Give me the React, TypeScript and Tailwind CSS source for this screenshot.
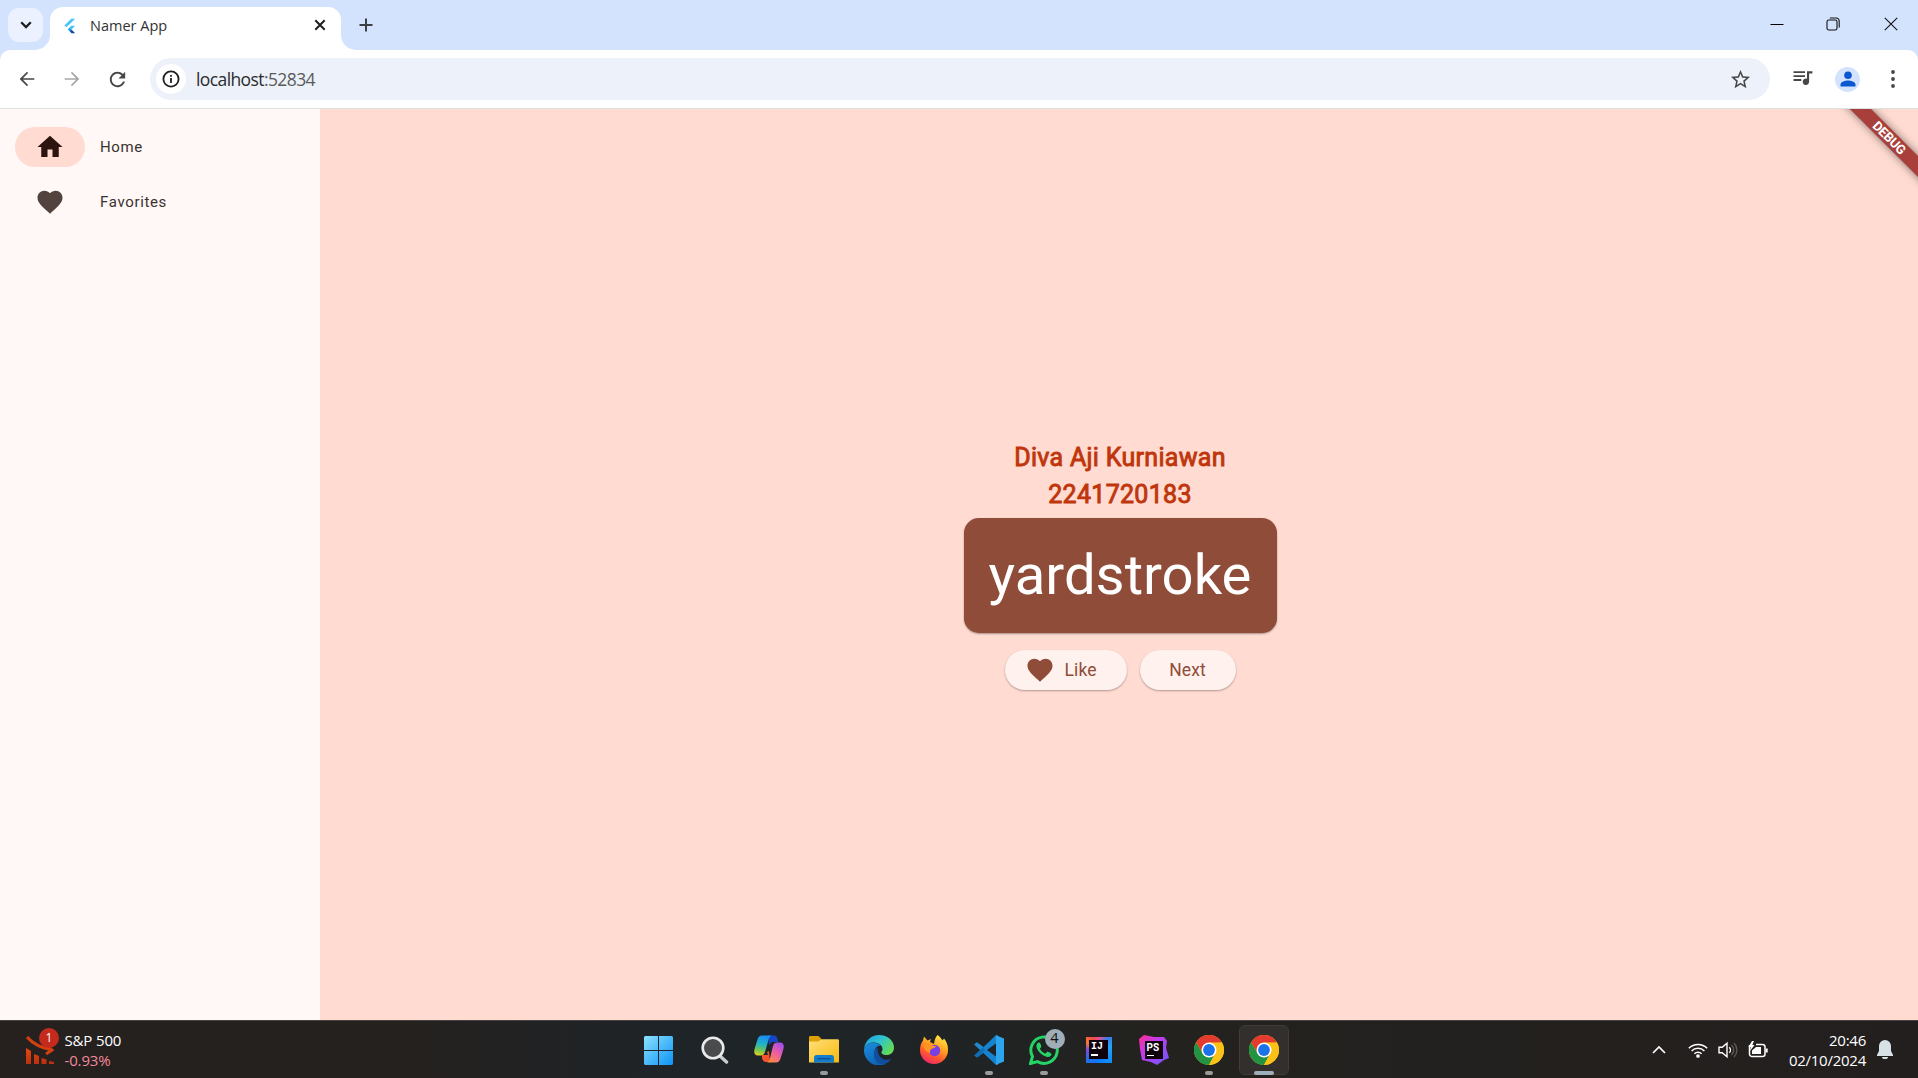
import type { ReactNode } from "react";

const UI = "font-['Open_Sans','Noto_Sans',sans-serif]";
const HEART =
  "M12 21.35l-1.45-1.32C5.4 15.36 2 12.28 2 8.5 2 5.42 4.42 3 7.5 3c1.74 0 3.41.81 4.5 2.09C13.09 3.81 14.76 3 16.5 3 19.58 3 22 5.42 22 8.5c0 3.78-3.4 6.86-8.55 11.54L12 21.35z";

function Mat({ d, className }: { d: string; className: string }) {
  return (
    <svg viewBox="0 0 24 24" fill="currentColor" className={`shrink-0 ${className}`}>
      <path d={d} />
    </svg>
  );
}

function TabStrip() {
  return (
    <header className="flex h-[50px] items-start bg-[#d3e3fd]">
      <button className="mt-2 ml-2 flex h-[34px] w-[35px] items-center justify-center rounded-[11px] bg-[#ebf1fe]">
        <svg viewBox="0 0 12 8" className="h-2 w-3" fill="none" stroke="#1f1f1f" strokeWidth="2.3">
          <path d="M1.2 1.2 6 6l4.8-4.8" />
        </svg>
      </button>
      <div className="relative mt-[7px] ml-[7px] flex h-[43px] w-[291px] items-center rounded-t-[13px] bg-white">
        <svg viewBox="0 0 15 15" className="absolute bottom-0 -left-[15px] size-[15px]">
          <path d="M15 0v15H0A15 15 0 0 0 15 0z" fill="#fff" />
        </svg>
        <svg viewBox="0 0 15 15" className="absolute -right-[15px] bottom-0 size-[15px]">
          <path d="M0 0v15h15A15 15 0 0 1 0 0z" fill="#fff" />
        </svg>
        <svg viewBox="0 0 12 16" className="-mt-[6px] ml-[14px] h-4 w-3">
          <path d="M7.3.7h3.9L2.4 9.3.4 7.4z" fill="#47c5fb" />
          <path d="M7.3 7.7h3.9L7.5 11.4 5.4 9.6z" fill="#47c5fb" />
          <path d="M3.8 11.4 5.6 9.6 7.5 11.4 5.6 13.3z" fill="#1c9df0" />
          <path d="M5.6 13.3 7.5 11.4 11.2 15.3H7.5z" fill="#0b4fa0" />
        </svg>
        <span className={`-mt-[6px] ml-[14px] text-[14.5px] text-[#333] ${UI}`}>Namer App</span>
        <svg viewBox="0 0 12 12" className="-mt-[7px] mr-[15px] ml-auto size-3" stroke="#1f1f1f" strokeWidth="2">
          <path d="M1.3 1.3l9.4 9.4M10.7 1.3l-9.4 9.4" />
        </svg>
      </div>
      <svg viewBox="0 0 14 14" className="mt-[18px] ml-[18px] size-[14px]" stroke="#3c3f43" strokeWidth="2">
        <path d="M7 .5v13M.5 7h13" />
      </svg>
      <div className="mt-[17px] mr-5 ml-auto flex items-center">
        <svg viewBox="0 0 14 14" className="mr-[42px] size-[14px]" stroke="#000" strokeWidth="1">
          <path d="M.5 7.5h13" />
        </svg>
        <svg viewBox="0 0 14 14" className="mr-[44px] size-[14px]" stroke="#111" strokeWidth="1.1" fill="none">
          <rect x="1" y="3" width="10" height="10" rx="1.8" />
          <path d="M3.8 1h6.4A3 3 0 0 1 13.2 4v6.4" />
        </svg>
        <svg viewBox="0 0 14 14" className="size-[14px]" stroke="#111" strokeWidth="1.1">
          <path d="M.8.8l12.4 12.4M13.2.8.8 13.2" />
        </svg>
      </div>
    </header>
  );
}

function Toolbar() {
  return (
    <div className="h-[59px] bg-[#d3e3fd]">
      <div className="flex h-full items-center rounded-t-[10px] border-b border-[#dce1e1] bg-white">
        <Mat
          className="ml-[16px] size-[22px] text-[#474747]"
          d="M20 11.1H7.6l5.6-5.7L12 4l-8 8 8 8 1.2-1.4-5.6-5.7H20v-1.8z"
        />
        <Mat
          className="ml-[23px] size-[22px] text-[#a8a8a8]"
          d="M4 12.9h12.4l-5.6 5.7L12 20l8-8-8-8-1.2 1.4 5.6 5.7H4v1.8z"
        />
        <Mat
          className="ml-[23px] size-[23px] text-[#474747]"
          d="M17.65 6.35C16.2 4.9 14.21 4 12 4c-4.42 0-7.99 3.58-7.99 8s3.57 8 7.99 8c3.73 0 6.84-2.55 7.73-6h-2.08c-.82 2.33-3.04 4-5.65 4-3.31 0-6-2.69-6-6s2.69-6 6-6c1.66 0 3.14.69 4.22 1.78L13 11h7V4l-2.35 2.35z"
        />
        <div className="ml-[21px] flex h-[42px] w-[1620px] items-center rounded-full bg-[#ecf1fa]">
          <span className="ml-[6px] flex size-[30px] items-center justify-center rounded-full bg-white">
            <svg viewBox="0 0 18 18" className="size-[18px]" fill="none" stroke="#1f1f1f" strokeWidth="1.8">
              <circle cx="9" cy="9" r="7.6" />
              <path d="M9 8v5M9 5v1.8" />
            </svg>
          </span>
          <span className={`ml-[10px] text-[17.5px] tracking-[-0.6px] text-[#5a5a5a] ${UI}`}>
            <span className="text-[#2b2b2b]">localhost</span>:52834
          </span>
          <Mat
            className="mr-[18.5px] ml-auto size-[23px] text-[#474747]"
            d="M22 9.24l-7.19-.62L12 2 9.19 8.63 2 9.24l5.46 4.73L5.82 21 12 17.27 18.18 21l-1.63-7.03L22 9.24zM12 15.4l-3.76 2.27 1-4.28-3.32-2.88 4.38-.38L12 6.1l1.71 4.04 4.38.38-3.32 2.88 1 4.28L12 15.4z"
          />
        </div>
        <svg viewBox="0 0 20 16" className="-mt-[2px] ml-[23px] h-4 w-5" fill="#474747">
          <path d="M.5 1.2H12v1.9H.5zM.5 5.2H12v1.9H.5zM.5 9.1h7.8V11H.5zM14 1.2h5.4v2.2h-3.3v8.4a3.2 3.2 0 1 1-2.1-3z" />
        </svg>
        <span className="ml-[22px] flex size-[25px] items-center justify-center rounded-full bg-[#d3e3fd]">
          <svg viewBox="0 0 16 16" className="size-4" fill="#0b57d0">
            <circle cx="8" cy="4.2" r="3.8" />
            <path d="M.5 15.5v-2C.5 10.8 5.500 9.500 8 9.500s7.500 1.300 7.500 4v2z" />
          </svg>
        </span>
        <svg viewBox="0 0 4 18" className="ml-[31px] h-[18px] w-1" fill="#474747">
          <circle cx="2" cy="2" r="1.9" />
          <circle cx="2" cy="9" r="1.9" />
          <circle cx="2" cy="16" r="1.9" />
        </svg>
      </div>
    </div>
  );
}

function NavItem({ label, d, active }: { label: string; d: string; active?: boolean }) {
  return (
    <a className="flex h-[55px] items-center">
      <span
        className={`ml-[15px] flex h-10 w-[70px] items-center justify-center rounded-full ${active ? "bg-[#ffdbd1] text-[#2c150f]" : "text-[#53433f]"}`}
      >
        <Mat d={d} className="size-[30px]" />
      </span>
      <span className="mt-[2px] ml-[15px] text-[15px] tracking-[0.65px] text-[#3b3230]">{label}</span>
    </a>
  );
}

function FlutterApp() {
  return (
    <main className="relative flex min-h-0 flex-1 overflow-hidden bg-[#ffdbd1] font-[Roboto,sans-serif]">
      <nav className="w-[320px] bg-[#fff8f6] pt-[10px]">
        <NavItem label="Home" d="M10 20v-6h4v6h5v-8h3L12 3 2 12h3v8z" active />
        <NavItem label="Favorites" d={HEART} />
      </nav>
      <section className="flex flex-1 flex-col items-center pt-[330px] pl-[2px]">
        <p className="text-[25px] leading-[37px] tracking-[0.3px] text-[#bf360c] [-webkit-text-stroke:0.9px_#bf360c]">Diva Aji Kurniawan</p>
        <p className="text-[25px] leading-[37px] tracking-[0.3px] text-[#bf360c] [-webkit-text-stroke:0.9px_#bf360c]">2241720183</p>
        <div className="mt-[4.500px] flex h-[115px] w-[313px] items-center justify-center rounded-[15px] bg-[#8f4c38] text-[56.25px] leading-[65px] text-white shadow-[0_1px_2px_rgba(0,0,0,0.35)]">
          yardstroke
        </div>
        <div className="mt-[17.500px] flex gap-[13px] text-[17.5px] tracking-[0.12px] text-[#8f4c38]">
          <button className="flex h-10 w-[122px] items-center rounded-full bg-[#fff1ed] pl-[20px] shadow-[0_1px_2px_rgba(0,0,0,0.3)]">
            <Mat d={HEART} className="size-[30px]" />
            <span className="ml-[10px]">Like</span>
          </button>
          <button className="h-10 w-[96px] rounded-full bg-[#fff1ed] shadow-[0_1px_2px_rgba(0,0,0,0.3)]">Next</button>
        </div>
      </section>
      <div className="absolute top-[21.500px] -right-[72px] flex h-[15px] w-[200px] rotate-45 items-center justify-center bg-[#a93f3b] pr-[2px] text-[13px] leading-none font-bold tracking-[-0.2px] text-white shadow-[0_0_8px_rgba(0,0,0,0.5)]">
        DEBUG
      </div>
    </main>
  );
}

function Slot({ children, run, active }: { children: ReactNode; run?: boolean; active?: boolean }) {
  return (
    <div className="relative flex h-full w-[55px] items-center justify-center">
      <div
        className={`relative flex size-[50px] items-center justify-center rounded-md ${active ? "border border-[#403c3a] bg-[#322f2d]" : ""}`}
      >
        {children}
      </div>
      {run && <span className="absolute bottom-[3px] left-[23.500px] h-1 w-2 rounded-full bg-[#9b9b9b]" />}
      {active && <span className="absolute bottom-[3px] left-[17.500px] h-1 w-5 rounded-full bg-[#9fb0bb]" />}
    </div>
  );
}

function Chrome() {
  return (
    <svg viewBox="0 0 30 30" className="size-[30px]">
      <circle cx="15" cy="15" r="15" fill="#fbc116" />
      <path d="M2 7.500A15 15 0 0 1 28 7.500L15 8.200 8.800 18.600z" fill="#e33b2e" />
      <path d="M2 7.500A15 15 0 0 0 15 30L21.200 18.600 15 22 8.800 18.600z" fill="#229342" />
      <path d="M28 7.500H15L21.200 18.600 15 30A15 15 0 0 0 28 7.500z" fill="#fbc116" />
      <circle cx="15" cy="15" r="7.500" fill="#fff" />
      <circle cx="15" cy="15" r="5.900" fill="#1a73e8" />
    </svg>
  );
}

function Taskbar() {
  return (
    <footer
      className={`grid h-[58px] grid-cols-[631px_660px_1fr] border-t border-[#474341] bg-[linear-gradient(90deg,#26211f_0%,#24211f_22%,#1f2428_34%,#1f2427_46%,#23221f_60%,#231f1e_100%)] text-white ${UI}`}
    >
      <div className="flex items-center">
        <div className="relative ml-[26px] h-[30px] w-[34px]">
          <svg viewBox="0 0 34 30" className="size-full">
            <defs>
              <linearGradient id="bars" x1="0" y1="0" x2="0" y2="1">
                <stop offset="0" stopColor="#e8480f" />
                <stop offset="1" stopColor="#b9300e" />
              </linearGradient>
            </defs>
            <path d="M1 2C8 10 16 13 26 15M20 10l6 5-6 4" fill="none" stroke="#d2400f" strokeWidth="3" />
            <path d="M0 13l5 3v13H0zM8 19l5 2v8H8zM15.500 23l5 1.500V29h-5zM23 26l5 1v2h-5z" fill="url(#bars)" />
          </svg>
          <span className="absolute -top-[7px] left-[13px] flex size-5 items-center justify-center rounded-full bg-[#c42b1c] text-[12px] leading-none">
            1
          </span>
        </div>
        <div className="ml-[4.500px] text-[15px] leading-5 tracking-[-0.15px]">
          <div>S&amp;P 500</div>
          <div className="text-[#f1899a]">-0.93%</div>
        </div>
      </div>
      <div className="flex h-full">
        <Slot>
          <svg viewBox="0 0 29 29" className="mt-px size-[29px]">
            <defs>
              <linearGradient id="win" x1="0" y1="0" x2="1" y2="1">
                <stop offset="0" stopColor="#8ce2ff" />
                <stop offset="1" stopColor="#0c93f5" />
              </linearGradient>
            </defs>
            <path d="M1 0h13v14H0V1zM15 0h13l1 1v13H15zM0 15h14v14H1l-1-1zM15 15h14v13l-1 1H15z" fill="url(#win)" />
          </svg>
        </Slot>
        <Slot>
          <svg viewBox="0 0 28 28" className="ml-[3px] size-7" fill="none">
            <path d="M19 20l6.500 6" stroke="#c9cccf" strokeWidth="3.400" strokeLinecap="round" />
            <circle cx="12" cy="12" r="10.300" fill="#4a4b4d" stroke="#e9eaeb" strokeWidth="2.600" />
          </svg>
        </Slot>
        <Slot>
          <svg viewBox="0 0 30 28" className="-mt-px h-7 w-[30px]">
            <defs>
              <linearGradient id="cpa" x1="0.3" y1="0" x2="0.1" y2="1">
                <stop offset="0" stopColor="#1a8ff0" />
                <stop offset="0.4" stopColor="#21b5c4" />
                <stop offset="0.7" stopColor="#72c552" />
                <stop offset="1" stopColor="#f5cf1b" />
              </linearGradient>
              <linearGradient id="cpb" x1="0.8" y1="0" x2="0.2" y2="1">
                <stop offset="0" stopColor="#a24df0" />
                <stop offset="0.5" stopColor="#ee5fa0" />
                <stop offset="1" stopColor="#ff8a3c" />
              </linearGradient>
            </defs>
            <path d="M14 .5h6c2.500 0 3 1.500 3.500 3.500L24.500 7H18l-3 3z" fill="#1746c4" />
            <path d="M8 20h6l-1-3 2-1 1 11h-4c-2.500 0-3.500-2-4-4z" fill="#f4532d" />
            <path d="M8 .5h9.500c-2 1-2.500 2.500-3.200 5L11 17c-.8 2.500-2 3.500-4 3.500H4C0 20.500-.3 17 .7 13.500L3.500 4.500C4.300 2 5.500.5 8 .5z" fill="url(#cpa)" />
            <path d="M22 27.500h-9c2-1 2.500-2.500 3.200-5L19 11c.8-2.500 2-3.500 4-3.500h3c4 0 4.300 3.500 3.300 7l-2.800 9c-.8 2.500-2 4-4.500 4z" fill="url(#cpb)" />
          </svg>
        </Slot>
        <Slot run>
          <svg viewBox="0 0 30 27" className="h-[27px] w-[30px]">
            <defs>
              <linearGradient id="fold" x1="0" y1="0" x2="1" y2="1">
                <stop offset="0" stopColor="#ffe07a" />
                <stop offset="1" stopColor="#f8b90f" />
              </linearGradient>
            </defs>
            <path d="M0 1.500C0 .5.500 0 1.500 0H9.500L13 3.500V8H0z" fill="#e0a008" />
            <path d="M0 5.500H9L13 3.200H28.500c1 0 1.500.5 1.500 1.500V26.500H0z" fill="url(#fold)" />
            <path d="M5 26.500V21.500A2.500 2.500 0 0 1 7.500 19h15a2.500 2.500 0 0 1 2.500 2.500v5z" fill="#137ccc" />
            <path d="M8.500 22.700h13" stroke="#0a4f92" strokeWidth="1.300" />
          </svg>
        </Slot>
        <Slot>
          <svg viewBox="0 0 30 30" className="size-[30px]">
            <defs>
              <linearGradient id="eda" x1="0" y1="0.1" x2="1" y2="0.6">
                <stop offset="0" stopColor="#1c9fe0" />
                <stop offset="0.5" stopColor="#2fc3d2" />
                <stop offset="1" stopColor="#62dc55" />
              </linearGradient>
              <linearGradient id="edb" x1="0" y1="0" x2="0.5" y2="1">
                <stop offset="0" stopColor="#1a8fdf" />
                <stop offset="1" stopColor="#0e62b4" />
              </linearGradient>
            </defs>
            <path d="M0 14C1 6 7 0 15 0c9 0 15 6 15 12.500 0 5-3.500 7.500-7.500 7.500-3.500 0-5.500-1.500-5-3 .4-1 1-1.500 1-3C18.500 10 14 7.500 9.500 7.500 5 7.500 1.500 10 0 14z" fill="url(#eda)" />
            <path d="M0 14.500C1.500 10 5 7.800 9.500 7.800c3 0 5.600 1 7.300 2.700C13 10.500 10.500 13.500 10.500 17.500c0 6 4.500 10.500 11 11.500A15 15 0 0 1 0 14.500z" fill="url(#edb)" />
            <path d="M13.500 12.500C9 15 8 23 14 28c4 3 10 1 13.500-4.200C20 27 13 22.500 13.500 12.500z" fill="#114f9e" />
          </svg>
        </Slot>
        <Slot>
          <svg viewBox="0 0 28 29" className="h-[29px] w-7">
            <defs>
              <linearGradient id="ff" x1="0.8" y1="0" x2="0.3" y2="1">
                <stop offset="0" stopColor="#fff04a" />
                <stop offset="0.4" stopColor="#ffa521" />
                <stop offset="0.7" stopColor="#ff5a2c" />
                <stop offset="1" stopColor="#f0246b" />
              </linearGradient>
            </defs>
            <path d="M17.500 0c2.500 1.500 4 4 5 5.500L24 3.500c3 3.500 4 7 4 11.500a14 14 0 0 1-28 0C0 11 1 8 3 5.500l1-4 3.500 4L11 4l-1 3 4 2c.5-3.500 1-6.500 3.500-9z" fill="url(#ff)" />
            <circle cx="14.500" cy="15.500" r="5.700" fill="#7a3fe0" />
            <path d="M3 10c4-2 7-1.500 9 .5l4 .8c-1 2-3 2-4.500 2.800-1.500 1-2 2.500-1.500 4.500C6 16.500 4 14 3 10z" fill="#ff9422" />
          </svg>
        </Slot>
        <Slot run>
          <svg viewBox="0 0 30 30" className="size-[30px]">
            <path d="M0 9.500 3 7.200 24 22.500V30L22 29.500z" fill="#2088cf" />
            <path d="M0 20.500 3 22.800 24 7.500V0L22 .500z" fill="#0d6fb8" />
            <path d="M22 0 9 13l3 3L23 8zM9 17l13 13V22L12.500 14z" fill="#1683ce" />
            <path d="M22 8.500v13L13 15z" fill="#202427" />
            <path d="M22 0.300 30 3.500v23L22 29.800z" fill="#2ca4ee" />
          </svg>
        </Slot>
        <Slot run>
          <svg viewBox="0 0 30 30" className="size-[30px]">
            <path d="M1.500 28.500l2-7A13.200 13.200 0 1 1 8.500 26.600z" fill="none" stroke="#25d366" strokeWidth="3" />
            <path d="M10 7.500c-1.500 0-3 1.700-2.500 4.500 1 4.500 6.500 9.500 11 10 2.500.2 4-1.300 4-3 0-.8-3.500-2.500-4.300-2.300-.8.300-1 1.800-2 1.800-1.700-.3-5-3.300-5.200-4.700 0-.8 1.300-1.200 1.300-2.200 0-.8-1-4.100-2.300-4.100z" fill="#25d366" />
          </svg>
          <span className="absolute top-1 left-[26px] flex size-5 items-center justify-center rounded-full bg-[#a0aeb8] text-[14.5px] leading-none text-[#111]">
            4
          </span>
        </Slot>
        <Slot>
          <span className="flex size-[26px] items-center justify-center bg-[conic-gradient(from_0deg,#e9508f,#3a7be8_10%,#21a5f5_20%,#087cfa_50%,#2a6be8_65%,#7a4de0_75%,#fc7a2a_84%,#f04a4a_92%,#e9508f)]">
            <span className="flex size-[19px] flex-col items-start bg-[#10020d] pt-[2px] pl-[2px] font-['Liberation_Mono',monospace] text-[10px] leading-[9px] font-bold">
              IJ
              <span className="mt-[3px] h-[1.500px] w-[7px] bg-white" />
            </span>
          </span>
        </Slot>
        <Slot>
          <span className="relative flex size-[30px] items-center justify-center">
            <svg viewBox="0 0 30 30" className="absolute size-[30px]">
              <defs>
                <linearGradient id="ps" x1="0" y1="0" x2="1" y2="1">
                  <stop offset="0" stopColor="#ff2d90" />
                  <stop offset="0.4" stopColor="#c03cf0" />
                  <stop offset="1" stopColor="#6b57ff" />
                </linearGradient>
              </defs>
              <path d="M0 4 5 0l10 2 10 0 3 4-1 7 3 10-5 2-7 5-6-3-9-2L1 14z" fill="url(#ps)" />
            </svg>
            <span className="relative flex size-[18px] flex-col items-start bg-[#10020d] pt-[2px] pl-[2px] font-[Roboto,sans-serif] text-[10px] leading-[9px] font-bold">
              PS
              <span className="mt-[3px] h-[1.500px] w-[7px] bg-white" />
            </span>
          </span>
        </Slot>
        <Slot run>
          <Chrome />
        </Slot>
        <Slot active>
          <Chrome />
        </Slot>
      </div>
      <div className="flex items-center justify-end pr-[25px]">
        <svg viewBox="0 0 14 9" className="mr-[22px] h-[9px] w-[14px]" fill="none" stroke="#fff" strokeWidth="1.700">
          <path d="M1 8l6-6 6 6" />
        </svg>
        <svg viewBox="0 0 20 16" className="mr-[10px] h-4 w-5" fill="none" stroke="#fff" strokeWidth="1.500">
          <path d="M.8 6.200a13 13 0 0 1 18.400 0M3.600 9a9 9 0 0 1 12.800 0M6.400 11.800a5 5 0 0 1 7.200 0" />
          <circle cx="10" cy="14" r="1.100" fill="#fff" />
        </svg>
        <svg viewBox="0 0 20 18" className="mr-[10px] h-[18px] w-5" fill="none" stroke="#fff" strokeWidth="1.400">
          <path d="M1 6.300h3.200L9 2.200v13.600L4.200 11.700H1z" />
          <path d="M11.300 6.200a4 4 0 0 1 0 5.600" />
          <path d="M13.600 4a7 7 0 0 1 0 10M16 2a10 10 0 0 1 0 14" stroke="#5c5856" />
        </svg>
        <svg viewBox="0 0 20 18" className="mr-[20.500px] h-[18px] w-5" fill="none" stroke="#fff" strokeWidth="1.500">
          <path d="M8 3.500h6.500A2.500 2.500 0 0 1 17 6v7a2.500 2.500 0 0 1-2.500 2.500H4A2.500 2.500 0 0 1 1.500 13V4" />
          <path d="M8 6h5v7H4V9.500z" fill="#fff" stroke="none" />
          <path d="M18.700 7.500v4" strokeWidth="2" />
          <path d="M4 0 .5 6h2.300L2 10l4.500-6H4.300L6 0z" fill="#fff" stroke="none" />
        </svg>
        <div className="text-right text-[15px] leading-5 tracking-[-0.25px]">
          <div>20:46</div>
          <div>02/10/2024</div>
        </div>
        <svg viewBox="0 0 16 19" className="ml-[11px] h-[19px] w-4" fill="#d6e2e6">
          <path d="M8 0a6 6 0 0 0-6 6v5L0 15v1h16v-1l-2-4V6A6 6 0 0 0 8 0zM5 17h6a3 2 0 0 1-6 0z" />
        </svg>
      </div>
    </footer>
  );
}

export default function App() {
  return (
    <div className="flex h-[1078px] w-[1918px] flex-col overflow-hidden">
      <TabStrip />
      <Toolbar />
      <FlutterApp />
      <Taskbar />
    </div>
  );
}
